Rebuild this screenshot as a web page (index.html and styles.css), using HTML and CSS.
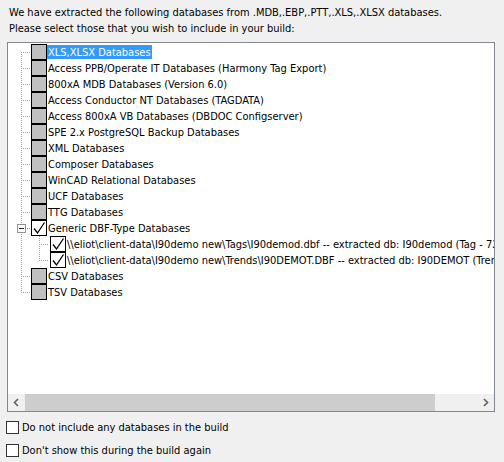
FILE: index.html
```html
<!DOCTYPE html>
<html>
<head>
<meta charset="utf-8">
<link rel="stylesheet" href="styles.css">
</head>
<body>
<div class="intro">
  <div>We have extracted the following databases from .MDB,.EBP,.PTT,.XLS,.XLSX databases.</div>
  <div>Please select those that you wish to include in your build:</div>
</div>
<div class="tree-box">
  <div class="tree-area">
    <div class="row"><span class="gutter g-first"></span><span class="cb"></span><span class="label sel">XLS,XLSX Databases</span></div>
    <div class="row"><span class="gutter g-mid"></span><span class="cb"></span><span class="label">Access PPB/Operate IT Databases (Harmony Tag Export)</span></div>
    <div class="row"><span class="gutter g-mid"></span><span class="cb"></span><span class="label">800xA MDB Databases (Version 6.0)</span></div>
    <div class="row"><span class="gutter g-mid"></span><span class="cb"></span><span class="label">Access Conductor NT Databases (TAGDATA)</span></div>
    <div class="row"><span class="gutter g-mid"></span><span class="cb"></span><span class="label">Access 800xA VB Databases (DBDOC Configserver)</span></div>
    <div class="row"><span class="gutter g-mid"></span><span class="cb"></span><span class="label">SPE 2.x PostgreSQL Backup Databases</span></div>
    <div class="row"><span class="gutter g-mid"></span><span class="cb"></span><span class="label">XML Databases</span></div>
    <div class="row"><span class="gutter g-mid"></span><span class="cb"></span><span class="label">Composer Databases</span></div>
    <div class="row"><span class="gutter g-mid"></span><span class="cb"></span><span class="label">WinCAD Relational Databases</span></div>
    <div class="row"><span class="gutter g-mid"></span><span class="cb"></span><span class="label">UCF Databases</span></div>
    <div class="row"><span class="gutter g-mid"></span><span class="cb"></span><span class="label">TTG Databases</span></div>
    <div class="row"><span class="gutter g-mid g-parent"><span class="expander"></span></span><span class="cb checked"><svg viewBox="0 0 16 16" width="16" height="16"><path d="M3 8.5 L6.5 13 L13.5 2.5" fill="none" stroke="#000" stroke-width="1.3"/></svg></span><span class="label">Generic DBF-Type Databases</span></div>
    <div class="row"><span class="gutter g-child"></span><span class="cb checked"><svg viewBox="0 0 16 16" width="16" height="16"><path d="M3 8.5 L6.5 13 L13.5 2.5" fill="none" stroke="#000" stroke-width="1.3"/></svg></span><span class="label">\\eliot\client-data\I90demo new\Tags\I90demod.dbf -- extracted db: I90demod (Tag - 72 tags)</span></div>
    <div class="row"><span class="gutter g-child-last"></span><span class="cb checked"><svg viewBox="0 0 16 16" width="16" height="16"><path d="M3 8.5 L6.5 13 L13.5 2.5" fill="none" stroke="#000" stroke-width="1.3"/></svg></span><span class="label">\\eliot\client-data\I90demo new\Trends\I90DEMOT.DBF -- extracted db: I90DEMOT (Trends - 12 tags)</span></div>
    <div class="row"><span class="gutter g-mid"></span><span class="cb"></span><span class="label">CSV Databases</span></div>
    <div class="row"><span class="gutter g-last"></span><span class="cb"></span><span class="label">TSV Databases</span></div>
  </div>
  <div class="hscroll">
    <span class="arrow"><svg viewBox="0 0 17 17" width="17" height="17"><path d="M10 5 L6.5 8.5 L10 12" fill="none" stroke="#606060" stroke-width="1.6"/></svg></span>
    <span class="track"><span class="thumb"></span></span>
    <span class="arrow"><svg viewBox="0 0 17 17" width="17" height="17"><path d="M7 5 L10.5 8.5 L7 12" fill="none" stroke="#606060" stroke-width="1.6"/></svg></span>
  </div>
</div>
<div class="options">
  <label class="opt"><span class="box"></span><span>Do not include any databases in the build</span></label>
  <label class="opt"><span class="box"></span><span>Don't show this during the build again</span></label>
</div>
</body>
</html>
```
FILE: styles.css
```css
html, body {
  margin: 0;
  padding: 0;
  background: #f0f0f0;
}
body {
  font-family: "DejaVu Sans Condensed", "DejaVu Sans", sans-serif;
  font-size: 11px;
  color: #000;
  width: 504px;
  height: 462px;
  overflow: hidden;
}
.intro {
  padding: 5px 0 0 9px;
  line-height: 16px;
  height: 37px;
}
.tree-box {
  margin-left: 7px;
  width: 486px;
  height: 368px;
  border: 1px solid #828790;
  background: #fff;
  display: flex;
  flex-direction: column;
}
.tree-area {
  flex: 1;
  overflow: hidden;
  padding-top: 1px;
  white-space: nowrap;
}
.row {
  display: flex;
  height: 16px;
  align-items: center;
}
.gutter {
  width: 23px;
  height: 16px;
  flex: none;
  position: relative;
  --dot-v: repeating-linear-gradient(to bottom, #a0a0a0 0 1px, transparent 1px 2px);
  --dot-h: repeating-linear-gradient(to right, #a0a0a0 0 1px, transparent 1px 2px);
  background-repeat: no-repeat;
}
.g-first {
  background-image: var(--dot-v), var(--dot-h);
  background-position: 13px 8px, 13px 8px;
  background-size: 1px 8px, 10px 1px;
}
.g-mid {
  background-image: var(--dot-v), var(--dot-h);
  background-position: 13px 0, 13px 8px;
  background-size: 1px 16px, 10px 1px;
}
.g-last {
  background-image: var(--dot-v), var(--dot-h);
  background-position: 13px 0, 13px 8px;
  background-size: 1px 9px, 10px 1px;
}
.g-child, .g-child-last {
  width: 42px;
  background-image: var(--dot-v), var(--dot-v), var(--dot-h);
  background-position: 13px 0, 31px 0, 31px 8px;
  background-size: 1px 16px, 1px 16px, 10px 1px;
}
.g-child-last {
  background-size: 1px 16px, 1px 9px, 10px 1px;
}
.expander {
  position: absolute;
  left: 9px;
  top: 4px;
  width: 7px;
  height: 7px;
  border: 1px solid #919191;
  background: #fff;
}
.expander::after {
  content: "";
  position: absolute;
  left: 1px;
  top: 3px;
  width: 5px;
  height: 1px;
  background: #222;
}
.cb {
  width: 14px;
  height: 14px;
  border: 1px solid #000;
  background: #c0c0c0;
  flex: none;
  display: flex;
}
.cb svg {
  margin: -1px;
}
.cb.checked {
  background: #fff;
}
.label {
  height: 14px;
  line-height: 16px;
  padding: 0 1px 0 1px;
  overflow: visible;
}
.label.sel {
  background: #3399ff;
  color: #fff;
}
.hscroll {
  height: 17px;
  flex: none;
  display: flex;
  background: #f0f0f0;
}
.arrow {
  width: 17px;
  height: 17px;
  flex: none;
}
.track {
  flex: 1;
  display: flex;
}
.thumb {
  width: 410px;
  height: 17px;
  background: #cdcdcd;
}
.options {
  padding: 4px 0 0 6px;
}
.opt {
  display: flex;
  align-items: center;
  height: 23px;
}
.box {
  width: 11px;
  height: 11px;
  border: 1px solid #333;
  background: #fff;
  margin-right: 3px;
}
```
